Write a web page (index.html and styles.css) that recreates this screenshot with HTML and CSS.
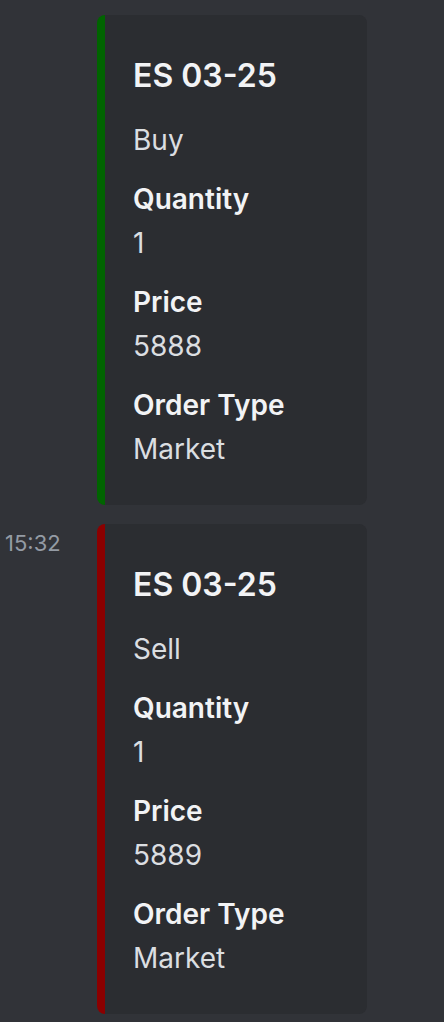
FILE: index.html
```html
<!DOCTYPE html>
<html lang="en">
<head>
<meta charset="utf-8">
<title>Orders</title>
<link rel="stylesheet" href="styles.css">
</head>
<body>
<div class="chat">
  <div class="msg">
    <div class="gutter"></div>
    <div class="embed embed-buy">
      <div class="embed-title">ES 03-25</div>
      <div class="embed-desc">Buy</div>
      <div class="fields">
        <div class="field"><div class="field-name">Quantity</div><div class="field-value">1</div></div>
        <div class="field"><div class="field-name">Price</div><div class="field-value">5888</div></div>
        <div class="field"><div class="field-name">Order Type</div><div class="field-value">Market</div></div>
      </div>
    </div>
  </div>
  <div class="msg">
    <div class="gutter"><span class="time">15:32</span></div>
    <div class="embed embed-sell">
      <div class="embed-title">ES 03-25</div>
      <div class="embed-desc">Sell</div>
      <div class="fields">
        <div class="field"><div class="field-name">Quantity</div><div class="field-value">1</div></div>
        <div class="field"><div class="field-name">Price</div><div class="field-value">5889</div></div>
        <div class="field"><div class="field-name">Order Type</div><div class="field-value">Market</div></div>
      </div>
    </div>
  </div>
</div>
</body>
</html>
```
FILE: styles.css
```css
html, body {
  margin: 0;
  padding: 0;
  background: #313338;
}
body {
  font-family: Inter, "Noto Sans", sans-serif;
  color: #dbdee1;
}
.chat {
  display: flex;
  flex-direction: column;
  gap: 19px;
  padding-top: 15px;
}
.msg {
  display: flex;
  align-items: flex-start;
}
.gutter {
  width: 97px;
  flex: 0 0 97px;
}
.time {
  display: block;
  margin-top: 4px;
  padding-left: 5px;
  font-size: 22px;
  line-height: 30px;
  color: #949ba4;
}
.embed {
  width: 270px;
  box-sizing: border-box;
  background: #2b2d31;
  border-radius: 8px;
  border-left: 8px solid #006400;
  padding: 41px 32px 35px 28px;
}
.embed-sell {
  border-left-color: #8b0000;
}
.embed-title {
  font-size: 32px;
  line-height: 40px;
  font-weight: 600;
  color: #f2f3f5;
}
.embed-desc {
  margin-top: 23px;
  font-size: 28px;
  line-height: 42px;
}
.fields {
  margin-top: 17px;
  display: flex;
  flex-direction: column;
  gap: 17px;
}
.field-name {
  font-size: 28px;
  line-height: 42px;
  font-weight: 600;
  color: #f2f3f5;
  margin-bottom: 2px;
}
.field-value {
  font-size: 28px;
  line-height: 42px;
}
```
